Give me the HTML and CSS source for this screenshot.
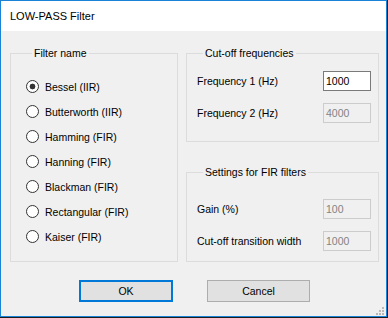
FILE: index.html
```html
<!DOCTYPE html>
<html lang="en">
<head>
  <meta charset="UTF-8">
  <title>LOW-PASS Filter</title>
  <link rel="stylesheet" href="styles.css">
</head>
<body>
  <div class="window">
    <div class="titlebar">LOW-PASS Filter</div>

    <div class="client">
      <div class="groups">
        <fieldset class="group group-filters">
          <legend>Filter name</legend>
          <label class="radio"><input type="radio" name="filter" checked> Bessel (IIR)</label>
          <label class="radio"><input type="radio" name="filter"> Butterworth (IIR)</label>
          <label class="radio"><input type="radio" name="filter"> Hamming (FIR)</label>
          <label class="radio"><input type="radio" name="filter"> Hanning (FIR)</label>
          <label class="radio"><input type="radio" name="filter"> Blackman (FIR)</label>
          <label class="radio"><input type="radio" name="filter"> Rectangular (FIR)</label>
          <label class="radio"><input type="radio" name="filter"> Kaiser (FIR)</label>
        </fieldset>

        <div class="right-col">
          <fieldset class="group group-freq">
            <legend>Cut-off frequencies</legend>
            <div class="field-row">
              <label for="freq1">Frequency 1 (Hz)</label>
              <input type="text" id="freq1" class="num-input" value="1000">
            </div>
            <div class="field-row">
              <label for="freq2">Frequency 2 (Hz)</label>
              <input type="text" id="freq2" class="num-input" value="4000" disabled>
            </div>
          </fieldset>

          <fieldset class="group group-fir">
            <legend>Settings for FIR filters</legend>
            <div class="field-row">
              <label for="gain">Gain (%)</label>
              <input type="text" id="gain" class="num-input" value="100" disabled>
            </div>
            <div class="field-row">
              <label for="width">Cut-off transition width</label>
              <input type="text" id="width" class="num-input" value="1000" disabled>
            </div>
          </fieldset>
        </div>
      </div>

      <div class="button-row">
        <button class="btn btn-default">OK</button>
        <button class="btn btn-cancel">Cancel</button>
      </div>
    </div>

    <!-- size grip -->
    <svg class="grip" width="10" height="10" viewBox="0 0 10 10">
      <rect x="8" y="2" width="2" height="2" fill="#b9b9b9"/>
      <rect x="5" y="5" width="2" height="2" fill="#b9b9b9"/>
      <rect x="8" y="5" width="2" height="2" fill="#b9b9b9"/>
      <rect x="2" y="8" width="2" height="2" fill="#b9b9b9"/>
      <rect x="5" y="8" width="2" height="2" fill="#b9b9b9"/>
      <rect x="8" y="8" width="2" height="2" fill="#b9b9b9"/>
    </svg>
  </div>
</body>
</html>
```

FILE: styles.css
```css
body {
  margin: 0;
  background-color: #1c1c1c;
  font-family: 'Liberation Sans', Arial, sans-serif;
  font-size: 10.5px;
  color: #000;
}

.window {
  position: relative;
  width: 387px;
  height: 317px;
  box-sizing: border-box;
  border: 1px solid #1883d7;
  background-color: #f0f0f0;
}

.titlebar {
  height: 30px;
  display: flex;
  align-items: center;
  padding-left: 9px;
  background-color: #fff;
  font-size: 11px;
}

.client {
  padding: 16px 7px 0 9px;
}

.groups {
  display: grid;
  grid-template-columns: 168px 193px;
  column-gap: 8px;
}

.group {
  margin: 0;
  padding: 0;
  min-width: 0;
  border: 1px solid #dcdcdc;
}

.group legend {
  margin-left: 6px;
  padding: 0 2px;
  line-height: 13px;
}

.group-filters {
  padding: 14px 0 0 15px;
}

.radio {
  display: flex;
  align-items: center;
  gap: 6px;
  height: 25px;
}

.radio input {
  appearance: none;
  -webkit-appearance: none;
  width: 13px;
  height: 13px;
  margin: 0;
  border: 1px solid #333;
  border-radius: 50%;
  background: #fff;
}

.radio input:checked {
  background: radial-gradient(circle, #333 0 2.6px, #fff 3.2px);
}

.group-freq {
  padding: 11px 7px 18px 10px;
}

.group-fir {
  margin-top: 24px;
  padding: 20px 7px 10px 10px;
}

.field-row {
  display: flex;
  justify-content: space-between;
  align-items: center;
  height: 20px;
}

.field-row + .field-row {
  margin-top: 12px;
}

.num-input {
  width: 48px;
  height: 20px;
  box-sizing: border-box;
  margin: 0;
  padding: 0 2px;
  border: 1px solid #7a7a7a;
  background: #fff;
  font-family: inherit;
  font-size: 10.5px;
  color: #000;
  outline: none;
}

.num-input:disabled {
  border-color: #cccccc;
  background: #f0f0f0;
  color: #838383;
}

.button-row {
  display: flex;
  gap: 34px;
  margin-top: 18px;
  padding-left: 69px;
}

.btn {
  height: 22px;
  box-sizing: border-box;
  margin: 0;
  padding: 0;
  border: 1px solid #adadad;
  background-color: #e1e1e1;
  font-family: inherit;
  font-size: 10.5px;
  color: #000;
}

.btn-default {
  width: 94px;
  border: 2px solid #0078d7;
}

.btn-cancel {
  width: 103px;
}

.grip {
  position: absolute;
  right: 2px;
  bottom: 1px;
}
```
